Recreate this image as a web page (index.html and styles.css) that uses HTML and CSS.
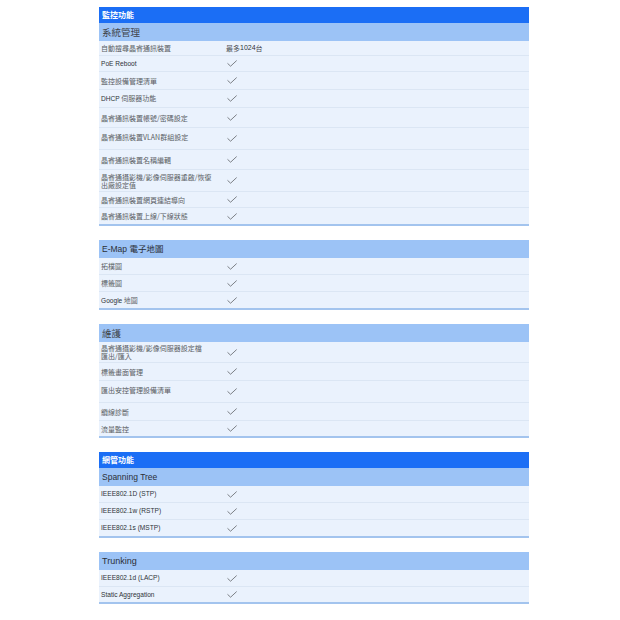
FILE: index.html
```html
<!DOCTYPE html>
<html lang="zh-Hant">
<head>
<meta charset="utf-8">
<title>監控功能</title>
<link rel="stylesheet" href="styles.css">
</head>
<body>
<svg width="0" height="0" class="defs" aria-hidden="true">
  <symbol id="chk" viewBox="0 0 10 7">
    <path d="M0.8 3.6 L3.6 6.2 L9.4 0.8" fill="none" stroke="#6f7378" stroke-width="0.9" stroke-linecap="round" stroke-linejoin="round"/>
  </symbol>
</svg>
<main class="spec">
  <section class="block">
    <div class="head-main">監控功能</div>
    <div class="head-sub cjk">系統管理</div>
    <div class="row h15"><div class="lbl">自動搜尋晶睿通訊裝置</div><div class="val">最多<span class="en num">1024</span>台</div></div>
    <div class="row h16"><div class="lbl en">PoE Reboot</div><div class="val"><svg class="ck"><use href="#chk"/></svg></div></div>
    <div class="row h18"><div class="lbl">監控設備管理清單</div><div class="val"><svg class="ck"><use href="#chk"/></svg></div></div>
    <div class="row h18"><div class="lbl"><span class="en">DHCP</span> 伺服器功能</div><div class="val"><svg class="ck"><use href="#chk"/></svg></div></div>
    <div class="row h20"><div class="lbl">晶睿通訊裝置帳號/密碼設定</div><div class="val"><svg class="ck"><use href="#chk"/></svg></div></div>
    <div class="row h22 top"><div class="lbl">晶睿通訊裝置VLAN群組設定</div><div class="val"><svg class="ck"><use href="#chk"/></svg></div></div>
    <div class="row h20"><div class="lbl">晶睿通訊裝置名稱編輯</div><div class="val"><svg class="ck"><use href="#chk"/></svg></div></div>
    <div class="row h22"><div class="lbl">晶睿通攝影機/影像伺服器重啟/恢復<br>出廠設定值</div><div class="val"><svg class="ck"><use href="#chk"/></svg></div></div>
    <div class="row h16"><div class="lbl">晶睿通訊裝置網頁連結導向</div><div class="val"><svg class="ck"><use href="#chk"/></svg></div></div>
    <div class="row h18 last"><div class="lbl">晶睿通訊裝置上線/下線狀態</div><div class="val"><svg class="ck"><use href="#chk"/></svg></div></div>
  </section>

  <section class="block">
    <div class="head-sub small">E-Map 電子地圖</div>
    <div class="row h17"><div class="lbl">拓樸圖</div><div class="val"><svg class="ck"><use href="#chk"/></svg></div></div>
    <div class="row h17"><div class="lbl">標籤圖</div><div class="val"><svg class="ck"><use href="#chk"/></svg></div></div>
    <div class="row h18 last"><div class="lbl"><span class="en">Google</span> 地圖</div><div class="val"><svg class="ck"><use href="#chk"/></svg></div></div>
  </section>

  <section class="block">
    <div class="head-sub cjk">維護</div>
    <div class="row h21"><div class="lbl">晶睿通攝影機/影像伺服器設定檔<br>匯出/匯入</div><div class="val"><svg class="ck"><use href="#chk"/></svg></div></div>
    <div class="row h18"><div class="lbl">標籤畫面管理</div><div class="val"><svg class="ck"><use href="#chk"/></svg></div></div>
    <div class="row h22 top"><div class="lbl">匯出安控管理設備清單</div><div class="val"><svg class="ck"><use href="#chk"/></svg></div></div>
    <div class="row h18"><div class="lbl">纜線診斷</div><div class="val"><svg class="ck"><use href="#chk"/></svg></div></div>
    <div class="row h17 last"><div class="lbl">流量監控</div><div class="val"><svg class="ck"><use href="#chk"/></svg></div></div>
  </section>

  <section class="block">
    <div class="head-main">網管功能</div>
    <div class="head-sub small">Spanning Tree</div>
    <div class="row h17"><div class="lbl en">IEEE802.1D (STP)</div><div class="val"><svg class="ck"><use href="#chk"/></svg></div></div>
    <div class="row h17"><div class="lbl en">IEEE802.1w (RSTP)</div><div class="val"><svg class="ck"><use href="#chk"/></svg></div></div>
    <div class="row h18 last"><div class="lbl en">IEEE802.1s (MSTP)</div><div class="val"><svg class="ck"><use href="#chk"/></svg></div></div>
  </section>

  <section class="block">
    <div class="head-sub">Trunking</div>
    <div class="row h17"><div class="lbl en">IEEE802.1d (LACP)</div><div class="val"><svg class="ck"><use href="#chk"/></svg></div></div>
    <div class="row h17 last"><div class="lbl en">Static Aggregation</div><div class="val"><svg class="ck"><use href="#chk"/></svg></div></div>
  </section>
</main>
</body>
</html>
```
FILE: styles.css
```css
html, body {
  margin: 0;
  padding: 0;
  background: #ffffff;
}

.defs {
  position: absolute;
  width: 0;
  height: 0;
}

.spec {
  width: 430px;
  margin: 7px 0 0 99px;
  display: flex;
  flex-direction: column;
  gap: 14px;
  font-family: "Liberation Sans", "Noto Sans CJK TC", sans-serif;
}

.block {
  display: flex;
  flex-direction: column;
}

.head-main {
  height: 16px;
  background: #1b6ef5;
  color: #ffffff;
  font-family: "Noto Sans CJK TC", sans-serif;
  font-size: 8px;
  font-weight: 700;
  line-height: 16px;
  padding-left: 3px;
}

.head-sub {
  height: 18px;
  background: #9cc3f6;
  color: #2b2f36;
  font-size: 9px;
  line-height: 18px;
  padding-left: 3px;
}

.head-sub.small {
  font-size: 8.5px;
}

.head-sub.cjk {
  font-family: "Noto Sans CJK TC", sans-serif;
  font-size: 9.5px;
  color: #40444a;
}

.row {
  display: grid;
  grid-template-columns: 127px 1fr;
  align-items: center;
  background: #eaf2fd;
  border-bottom: 1px solid #dbe6f4;
  box-sizing: border-box;
  color: #5a5e64;
  font-family: "Noto Sans CJK TC", sans-serif;
  font-size: 7px;
  line-height: 8px;
}

.row.last {
  border-bottom: 2px solid #a3c4ee;
}

.row.top .lbl {
  align-self: start;
  padding-top: 5px;
}

.h15 { height: 15px; }
.h16 { height: 16px; }
.h17 { height: 17px; }
.h18 { height: 18px; }
.h20 { height: 20px; }
.h21 { height: 21px; }
.h22 { height: 22px; }

.lbl {
  padding-left: 2px;
}

.en {
  font-family: "Liberation Sans", sans-serif;
  color: #2e3238;
  font-size: 6.6px;
}

.num {
  font-size: 7px;
}

.val {
  display: flex;
  align-items: center;
  color: #4a4e54;
}

.ck {
  width: 10px;
  height: 7px;
  margin-left: 1px;
}
```
